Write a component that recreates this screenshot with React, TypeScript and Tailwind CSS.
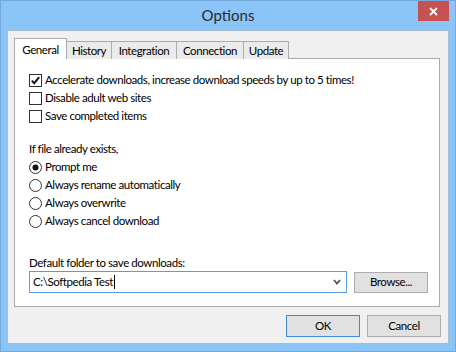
import React from "react";

const font = { fontFamily: 'Lato, "Noto Sans", sans-serif' };

function CheckBox({ checked, label }: { checked?: boolean; label: string }) {
  return (
    <div className="flex h-[18px] items-center">
      <svg width="13" height="13" viewBox="0 0 13 13" className="shrink-0">
        <rect x="0.5" y="0.5" width="12" height="12" fill="#fff" stroke="#333" />
        {checked && (
          <path d="M2.8 6.6 L5.2 9.2 L10.2 3.2" fill="none" stroke="#111" strokeWidth="1.9" />
        )}
      </svg>
      <span className="ml-[3px] whitespace-nowrap">{label}</span>
    </div>
  );
}

function Radio({ checked, label }: { checked?: boolean; label: string }) {
  return (
    <div className="flex h-[18px] items-center">
      <svg width="13" height="13" viewBox="0 0 13 13" className="shrink-0">
        <circle cx="6.5" cy="6.5" r="6" fill="#fff" stroke="#333" />
        {checked && <circle cx="6.5" cy="6.5" r="3" fill="#111" />}
      </svg>
      <span className="ml-[3px] whitespace-nowrap">{label}</span>
    </div>
  );
}

export default function App() {
  return (
    <div
      className="flex h-[352px] w-[456px] flex-col overflow-hidden border border-[#74a9de] bg-[#8bc4f6] text-[11.5px] tracking-[-0.42px] text-black"
      style={font}
    >
      {/* Title bar */}
      <div className="relative flex h-[29px] shrink-0 items-center justify-center">
        <span className="text-[15px] tracking-normal text-[#2b2b2b]">Options</span>
        <div className="absolute right-[6px] top-0 flex h-[20px] w-[31px] items-center justify-center bg-[#c75050]">
          <svg width="9" height="9" viewBox="0 0 9 9">
            <path d="M1 1 L8 8 M8 1 L1 8" stroke="#fff" strokeWidth="1.8" />
          </svg>
        </div>
      </div>

      {/* Client area */}
      <div className="mx-[6px] flex h-[314px] shrink-0 flex-col border border-[#a3bdd6] bg-[#f0f0f0] px-[6px] pt-[7px]">
        {/* Tabs */}
        <div className="relative z-10 -mb-px flex h-[21px] items-end">
          <div className="flex h-[21px] w-[53px] items-start justify-center border-l border-r border-t border-[#acacac] bg-white pt-[2px]">
            General
          </div>
          <div className="flex h-[18px] w-[45px] items-center justify-center border-r border-t border-[#acacac] bg-[#ebebeb]">
            History
          </div>
          <div className="flex h-[18px] w-[65px] items-center justify-center border-r border-t border-[#acacac] bg-[#ebebeb]">
            Integration
          </div>
          <div className="flex h-[18px] w-[67px] items-center justify-center border-r border-t border-[#acacac] bg-[#ebebeb]">
            Connection
          </div>
          <div className="flex h-[18px] w-[45px] items-center justify-center border-r border-t border-[#acacac] bg-[#ebebeb]">
            Update
          </div>
        </div>

        {/* Panel */}
        <div className="mr-[2px] flex h-[249px] flex-col border border-[#acacac] bg-white pl-[14px] pt-[12px]">
          <CheckBox checked label="Accelerate downloads, increase download speeds by up to 5 times!" />
          <CheckBox label="Disable adult web sites" />
          <CheckBox label="Save completed items" />

          <div className="mt-[15px] flex h-[18px] items-center">If file already exists,</div>
          <Radio checked label="Prompt me" />
          <Radio label="Always rename automatically" />
          <Radio label="Always overwrite" />
          <Radio label="Always cancel download" />

          <div className="mt-[25px] flex h-[16px] items-center">Default folder to save downloads:</div>
          <div className="flex items-center gap-[7px]">
            <div className="flex h-[22px] w-[318px] items-center border border-[#569de5] bg-white pl-[3px] pr-[5px]">
              <span className="whitespace-nowrap">C:\Softpedia Test</span>
              <span className="ml-[1px] h-[14px] w-px bg-black" />
              <div className="flex-1" />
              <svg width="8" height="6" viewBox="0 0 8 6">
                <path d="M1 1 L4 4.5 L7 1" fill="none" stroke="#555" strokeWidth="1.8" />
              </svg>
            </div>
            <div className="flex h-[21px] w-[74px] items-center justify-center border border-[#adadad] bg-[#e1e1e1]">
              Browse...
            </div>
          </div>
        </div>

        {/* Buttons */}
        <div className="mt-[8px] flex justify-end gap-[7px] pr-[1px]">
          <div className="flex h-[22px] w-[74px] items-center justify-center border border-[#3c8ad8] bg-[#e1e1e1]">
            OK
          </div>
          <div className="flex h-[22px] w-[74px] items-center justify-center border border-[#adadad] bg-[#e1e1e1]">
            Cancel
          </div>
        </div>
      </div>
    </div>
  );
}
